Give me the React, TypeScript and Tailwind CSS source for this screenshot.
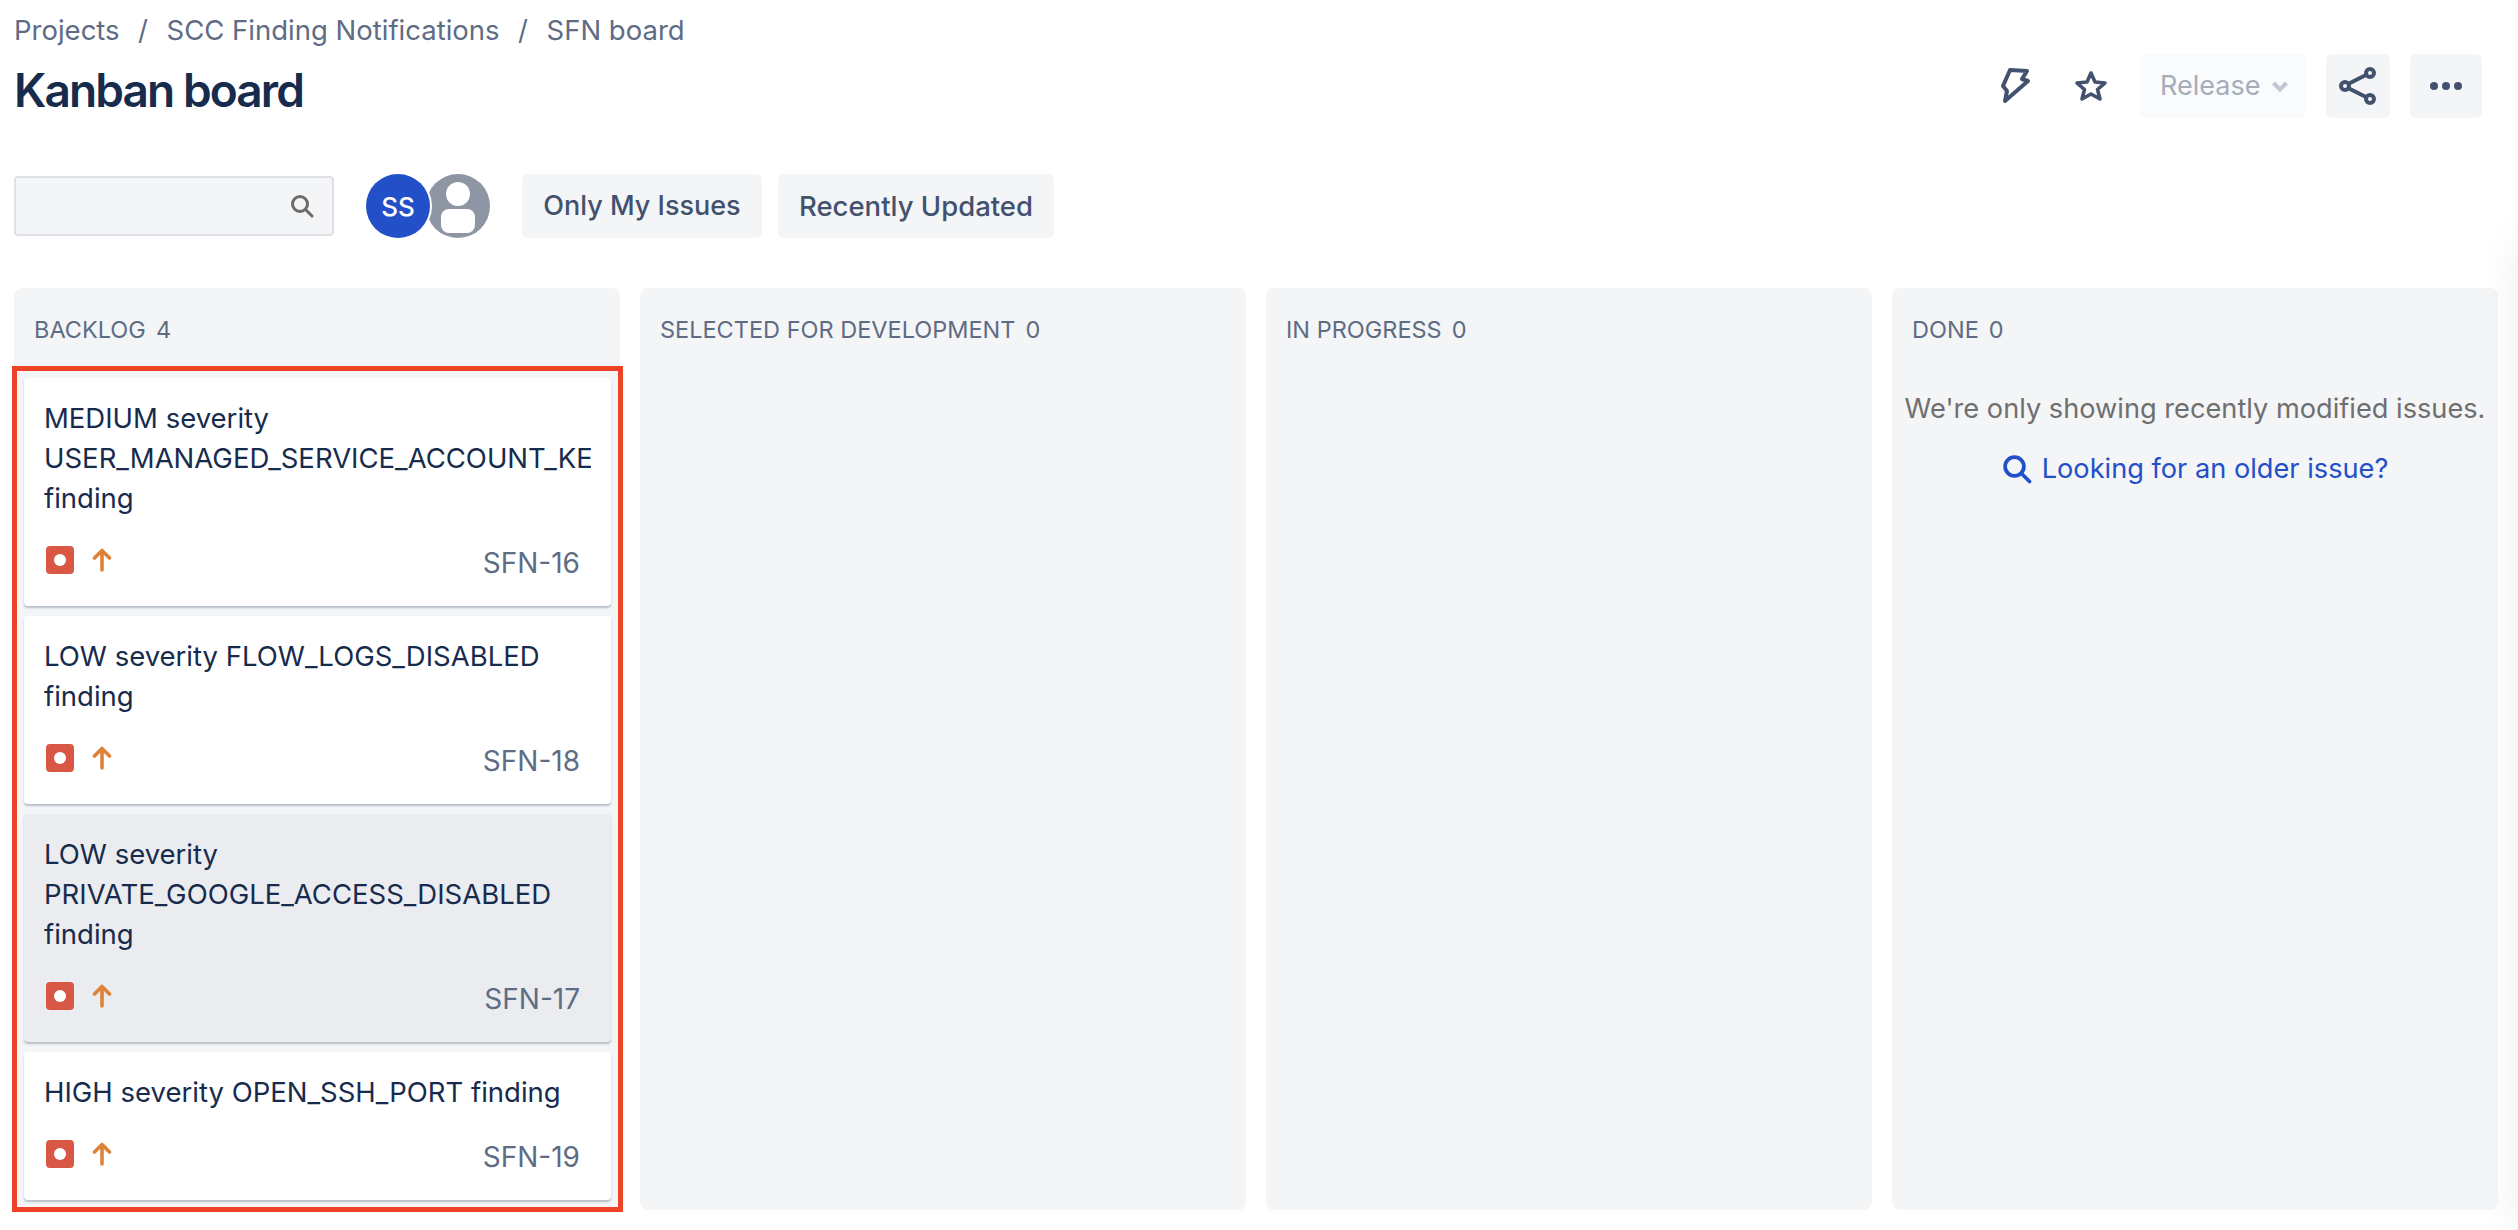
// Kanban board page: header, filter toolbar and the four status columns.

const FONT = "font-['Inter','Noto_Sans',sans-serif]";

type Issue = { lines: string[]; id: string; active?: boolean };

const issues: Issue[] = [
  { lines: ['MEDIUM severity', 'USER_MANAGED_SERVICE_ACCOUNT_KEY', 'finding'], id: 'SFN-16' },
  { lines: ['LOW severity FLOW_LOGS_DISABLED', 'finding'], id: 'SFN-18' },
  { lines: ['LOW severity', 'PRIVATE_GOOGLE_ACCESS_DISABLED', 'finding'], id: 'SFN-17', active: true },
  { lines: ['HIGH severity OPEN_SSH_PORT finding'], id: 'SFN-19' },
];

function SearchIcon({ className }: { className: string }) {
  return (
    <svg viewBox="0 0 24 24" fill="none" stroke="currentColor" strokeWidth="3" strokeLinecap="round" className={className}>
      <circle cx="10" cy="10" r="7.5" />
      <path d="M16 16l6 6" />
    </svg>
  );
}

function BugIcon() {
  return (
    <span className="flex h-[28px] w-[28px] items-center justify-center rounded-[4px] bg-[#d95745]">
      <span className="h-[12px] w-[12px] rounded-full bg-white" />
    </span>
  );
}

function ArrowUp() {
  return (
    <svg viewBox="0 0 20 24" fill="none" stroke="#de8238" strokeWidth="3.6" strokeLinecap="round" strokeLinejoin="round" className="h-[24px] w-[20px]">
      <path d="M10 22V3M2.5 10L10 2.5l7.5 7.5" />
    </svg>
  );
}

function Card({ issue }: { issue: Issue }) {
  return (
    <div
      className={`rounded-[4px] px-[20px] pt-[20px] pb-[31px] shadow-[0_2px_2px_rgba(9,30,66,0.25)] ${
        issue.active ? 'bg-[#ebecf0]' : 'bg-white'
      }`}
    >
      <div className="overflow-hidden text-[27.5px] leading-[40px] text-[#172b4d]">
        {issue.lines.map((line) => (
          <div key={line} className="whitespace-nowrap">
            {line}
          </div>
        ))}
      </div>
      <div className="mt-[27px] flex h-[30px] items-center justify-between pr-[11px]">
        <div className="flex items-center gap-[18px] pl-[2px]">
          <BugIcon />
          <ArrowUp />
        </div>
        <span className="pt-[6px] text-[28px] text-[#5e6c84]">{issue.id}</span>
      </div>
    </div>
  );
}

function ColumnHeader({ title, count }: { title: string; count: number }) {
  return (
    <div className="flex h-[78px] items-center gap-[10px] px-[20px] pt-[6px] text-[23.5px] text-[#5e6c84]">
      <span>{title}</span>
      <span>{count}</span>
    </div>
  );
}

export default function App() {
  return (
    <div className={`${FONT} relative flex h-screen flex-col overflow-hidden bg-white pr-[20px] pb-[20px] pl-[14px]`}>
      <header className="flex h-[174px] shrink-0 justify-between">
        <div>
          <div className="flex h-[60px] items-center gap-[18.5px] pt-[2px] text-[27.5px] text-[#5e6c84]">
            <span>Projects</span>
            <span>/</span>
            <span>SCC Finding Notifications</span>
            <span>/</span>
            <span>SFN board</span>
          </div>
          <h1 className="text-[46px] leading-[60px] font-semibold tracking-[-1.9px] text-[#172b4d]">Kanban board</h1>
        </div>
        <div className="mt-[54px] flex h-[64px] items-center pr-[16px] text-[#42526e]">
          <svg viewBox="0 0 32 38" fill="none" stroke="currentColor" strokeWidth="4" strokeLinejoin="round" strokeLinecap="round" className="h-[38px] w-[32px]">
            <path d="M10 3l17 1-5 8 6 2L5 34l2-10-4-5z" />
          </svg>
          <svg viewBox="0 0 34 32" fill="none" stroke="currentColor" strokeWidth="3.6" strokeLinejoin="round" className="ml-[42px] h-[32px] w-[34px]">
            <path d="M17 3l4 9 10 1-7.5 6.500L26 29l-9-5-9 5 2.500-9.500L3 13l10-1z" />
          </svg>
          <div className="ml-[32px] flex h-[64px] w-[166px] items-center gap-[12px] rounded-[6px] bg-[#fafbfc] pt-[1px] pl-[20px] text-[27px] text-[#a5adba]">
            <span>Release</span>
            <svg viewBox="0 0 16 12" fill="none" stroke="#c1c7d0" strokeWidth="4" className="h-[12px] w-[16px]">
              <path d="M1.500 2l6.500 6.500L14.500 2" />
            </svg>
          </div>
          <div className="ml-[20px] flex h-[64px] w-[64px] items-center justify-center rounded-[6px] bg-[#f4f5f7]">
            <svg viewBox="0 0 40 40" fill="none" stroke="currentColor" strokeWidth="4" className="h-[40px] w-[40px]">
              <path d="M11 17.500L28 9M11 22.500L28 31" />
              <circle cx="7" cy="20" r="4" />
              <circle cx="32" cy="7" r="4" />
              <circle cx="32" cy="33" r="4" />
            </svg>
          </div>
          <div className="ml-[20px] flex h-[64px] w-[72px] items-center justify-center gap-[4px] rounded-[6px] bg-[#f4f5f7]">
            <span className="h-[8px] w-[8px] rounded-full bg-[#42526e]" />
            <span className="h-[8px] w-[8px] rounded-full bg-[#42526e]" />
            <span className="h-[8px] w-[8px] rounded-full bg-[#42526e]" />
          </div>
        </div>
      </header>

      <div className="flex h-[114px] shrink-0 items-start">
        <div className="mt-[2px] flex h-[60px] w-[320px] items-center justify-end rounded-[4px] border-2 border-[#dfe1e6] bg-[#f4f5f7] pr-[18px] text-[#6b6b6b]">
          <SearchIcon className="h-[24px] w-[24px]" />
        </div>
        <div className="ml-[32px] flex">
          <div className="relative z-10 flex h-[64px] w-[64px] items-center justify-center rounded-full bg-[#2350c8] text-[26px] font-medium text-white ring-2 ring-white">
            SS
          </div>
          <div className="relative -ml-[4px] flex h-[64px] w-[64px] flex-col items-center overflow-hidden rounded-full bg-[#8f96a3]">
            <span className="mt-[8px] h-[24px] w-[24px] rounded-full bg-white" />
            <span className="mt-[3px] h-[24px] w-[34px] rounded-[8px] bg-white" />
          </div>
        </div>
        <button className="ml-[32px] h-[64px] w-[240px] rounded-[6px] bg-[#f4f5f7] pt-[1px] text-[27px] font-medium text-[#42526e]">
          Only My Issues
        </button>
        <button className="ml-[16px] h-[64px] w-[276px] rounded-[6px] bg-[#f4f5f7] pt-[1px] text-[27.5px] font-medium text-[#42526e]">
          Recently Updated
        </button>
      </div>

      <div className="grid min-h-0 flex-1 grid-cols-4 grid-rows-[minmax(0,1fr)] gap-[20px]">
        <section className="rounded-[8px] bg-[#f4f5f7]">
          <ColumnHeader title="BACKLOG" count={4} />
          <div className="-mr-[3px] -ml-[2px] flex flex-col gap-[10px] border-[5px] border-[#ee4327] p-[7px]">
            {issues.map((issue) => (
              <Card key={issue.id} issue={issue} />
            ))}
          </div>
        </section>
        <section className="rounded-[8px] bg-[#f4f5f7]">
          <ColumnHeader title="SELECTED FOR DEVELOPMENT" count={0} />
        </section>
        <section className="rounded-[8px] bg-[#f4f5f7]">
          <ColumnHeader title="IN PROGRESS" count={0} />
        </section>
        <section className="rounded-[8px] bg-[#f4f5f7]">
          <ColumnHeader title="DONE" count={0} />
          <p className="mt-[23px] text-center text-[27.2px] leading-[40px] whitespace-nowrap text-[#6f6f6f]">
            We're only showing recently modified issues.
          </p>
          <div className="mt-[20px] flex items-center justify-center gap-[10px] text-[27.2px] leading-[40px] text-[#2350c8]">
            <SearchIcon className="h-[30px] w-[30px]" />
            <span>Looking for an older issue?</span>
          </div>
        </section>
      </div>

      {/* Shadow of the side panel that sits just off the right edge */}
      <div className="pointer-events-none absolute top-[240px] -right-[30px] bottom-0 w-[30px] shadow-[0_0_40px_rgba(9,30,66,0.08)]" />
    </div>
  );
}
